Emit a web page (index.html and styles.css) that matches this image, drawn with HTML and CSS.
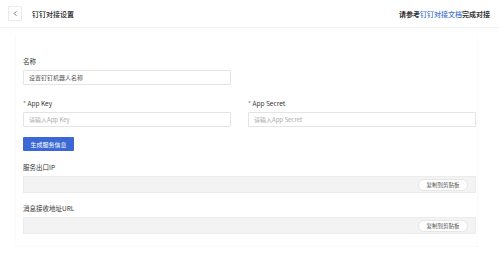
FILE: index.html
```html
<!DOCTYPE html>
<html lang="zh-CN">
<head>
    <meta charset="UTF-8">
    <meta name="viewport" content="width=device-width, initial-scale=1.0">
    <title>钉钉对接设置</title>
    <link rel="stylesheet" href="styles.css">
</head>
<body>
    <header class="top-bar">
        <div class="top-left">
            <button class="back-btn">
                <svg width="7" height="7" viewBox="0 0 8 8"><path d="M5 1.5 L2.5 4 L5 6.5" fill="none" stroke="#555" stroke-width="0.9"/></svg>
            </button>
            <span class="page-title">钉钉对接设置</span>
        </div>
        <div class="top-tip">请参考<a href="#">钉钉对接文档</a>完成对接</div>
    </header>

    <main class="card">
        <div class="field">
            <label class="field-label">名称</label>
            <input class="text-input half" type="text" placeholder="设置钉钉机器人名称">
        </div>

        <div class="field-row">
            <div class="field">
                <label class="field-label"><i>*</i> App Key</label>
                <input class="text-input light" type="text" placeholder="请输入App Key">
            </div>
            <div class="field">
                <label class="field-label"><i>*</i> App Secret</label>
                <input class="text-input light" type="text" placeholder="请输入App Secret">
            </div>
        </div>

        <button class="primary-btn">生成服务信息</button>

        <div class="field">
            <label class="field-label">服务出口IP</label>
            <div class="readonly-box">
                <button class="copy-btn">复制到剪贴板</button>
            </div>
        </div>

        <div class="field">
            <label class="field-label">消息接收地址URL</label>
            <div class="readonly-box">
                <button class="copy-btn">复制到剪贴板</button>
            </div>
        </div>
    </main>
</body>
</html>
```

FILE: styles.css
```css
* {
    margin: 0;
    padding: 0;
    box-sizing: border-box;
}

body {
    width: 100%;
    height: 100vh;
    background: #fff;
    font-family: "Noto Sans CJK SC", "Noto Sans", sans-serif;
    color: #333;
    font-size: 7px;
}

.top-bar {
    height: 28px;
    display: flex;
    align-items: center;
    justify-content: space-between;
    padding: 0 9px 0 8px;
    border-bottom: 1px solid #f3f3f3;
}

.top-left {
    display: flex;
    align-items: center;
}

.back-btn {
    width: 14px;
    height: 15px;
    display: flex;
    align-items: center;
    justify-content: center;
    background: #fff;
    border: 1px solid #ebebeb;
    border-radius: 1px;
    margin-right: 10px;
}

.page-title {
    font-size: 7px;
    font-weight: 500;
    color: #222;
}

.top-tip {
    font-size: 7px;
    font-weight: 700;
    color: #333;
}

.top-tip a {
    color: #3d6fd1;
    font-weight: 500;
    text-decoration: none;
}

.card {
    margin: 7px 21px 0 15px;
    padding: 21px 3px 2px 7px;
    border: 1px solid #fafafa;
    border-top: none;
    display: flex;
    flex-direction: column;
}

.field {
    display: flex;
    flex-direction: column;
}

.field-label {
    font-size: 6.5px;
    line-height: 10px;
    color: #333;
    margin-bottom: 4px;
}

.field-label i {
    font-style: normal;
    color: #777;
}

.text-input {
    height: 15px;
    border: 1px solid #e4e4e4;
    border-radius: 1px;
    padding: 0 5px;
    font-family: inherit;
    font-size: 6px;
    color: #333;
    outline: none;
}

.text-input::placeholder {
    color: #555;
}

.text-input.light::placeholder {
    color: #aaa;
}

.half {
    width: 208px;
    margin-bottom: 13px;
}

.field-row {
    display: grid;
    grid-template-columns: 208px 228px;
    column-gap: 17px;
    margin-bottom: 10px;
}

.primary-btn {
    width: 51px;
    height: 14px;
    background: #3b68d4;
    color: #fff;
    border: none;
    border-radius: 1px;
    font-family: inherit;
    font-size: 6px;
    margin-bottom: 11px;
}

.readonly-box {
    width: 453px;
    height: 17px;
    background: #f3f3f3;
    border: 1px solid #ececec;
    display: flex;
    align-items: center;
    justify-content: flex-end;
    padding-right: 7px;
    margin-bottom: 10px;
}

.copy-btn {
    width: 50px;
    height: 12px;
    background: #fff;
    border: 1px solid #e6e6e6;
    border-radius: 6px;
    font-family: inherit;
    font-size: 5.5px;
    color: #555;
}
```
